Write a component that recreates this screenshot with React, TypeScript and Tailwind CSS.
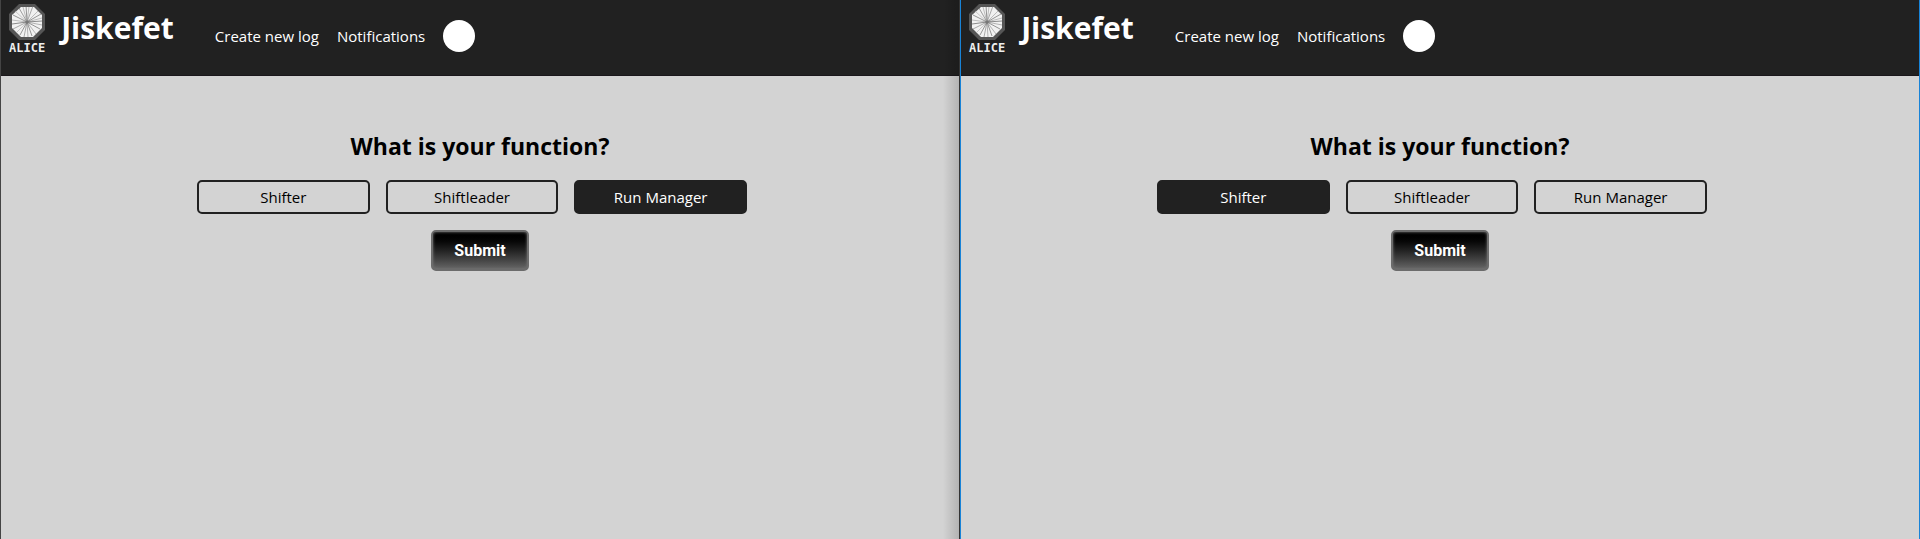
import { useState } from "react";

const FUNCTIONS = ["Shifter", "Shiftleader", "Run Manager"];

const RAYS = [
  [17, 1, "#555"], [20, 3, "#999"], [24, 2, "#777"], [29, 7, "#999"], [32, 10, "#555"],
  [33, 14, "#999"], [33, 17, "#444"], [33, 21, "#888"], [31, 25, "#555"], [27, 30, "#888"],
  [23, 32, "#555"], [19, 33, "#888"], [15, 33, "#777"], [11, 31, "#555"], [7, 29, "#aaa"],
  [4, 25, "#777"], [3, 20, "#444"], [3, 16, "#999"], [4, 11, "#555"], [6, 7, "#aaa"],
  [10, 4, "#666"], [14, 3, "#999"],
] as const;

function AliceLogo() {
  return (
    <svg viewBox="0 0 36 36" className="block size-9" aria-hidden="true">
      <path d="M10 0h16l10 10v16L26 36H10L0 26V10z" fill="#555" />
      <path d="M12 3h13l8 8v13l-9 9H12l-9-9V11z" fill="#f1f1f1" />
      {RAYS.map(([x, y, color]) => (
        <path key={`${x}-${y}`} d={`M18 18L${x} ${y}`} stroke={color} strokeWidth="0.6" />
      ))}
      <circle cx="18" cy="18" r="1.5" fill="#777" />
    </svg>
  );
}

function Header() {
  return (
    <header className="flex h-19 items-start border-b border-[#1a171b] bg-[#212121] pl-2 text-white">
      <a href="#home" className="flex items-start">
        <span className="flex flex-col items-center pt-1">
          <AliceLogo />
          <span className="font-['DejaVu_Sans_Mono',monospace] text-xs leading-4 font-bold text-[#eee]">
            ALICE
          </span>
        </span>
        <span className="ml-4 pt-1 text-[30px] leading-12 font-bold">Jiskefet</span>
      </a>
      <nav className="ml-10 flex items-center gap-4.5 pt-5 pl-px text-[15px] leading-8">
        <a href="#create">Create new log</a>
        <a href="#notifications">Notifications</a>
        <button type="button" aria-label="Profile" className="size-8 rounded-full bg-white" />
      </nav>
    </header>
  );
}

function FunctionPage({ initial }: { initial: string }) {
  const [selected, setSelected] = useState(initial);
  return (
    <>
      <Header />
      <main className="flex flex-col items-center px-4 pt-12">
        <h1 className="text-[23px] leading-11 font-bold text-black">What is your function?</h1>
        <div className="mt-3 flex w-full max-w-[566px]">
          {FUNCTIONS.map((name) => (
            <button
              key={name}
              type="button"
              aria-pressed={selected === name}
              onClick={() => setSelected(name)}
              className={`mr-4 h-[34px] flex-1 rounded-[5px] border-2 border-[#212121] text-[15px] ${
                selected === name ? "bg-[#212121] text-white" : "text-black"
              }`}
            >
              {name}
            </button>
          ))}
        </div>
        <button
          type="submit"
          className="mt-4 h-[41px] w-[98px] rounded-[5px] border-2 border-[#6b6b6b] bg-linear-to-b from-black to-[#666] font-[Roboto,sans-serif] text-base font-bold text-white shadow-[inset_0_0_3px_#777]"
        >
          Submit
        </button>
      </main>
    </>
  );
}

export default function App() {
  return (
    <div className="grid min-h-screen grid-cols-2 bg-[#d3d3d3] font-['Open_Sans',sans-serif]">
      <section className="relative border-x border-l-[#444] border-r-[#333]">
        <FunctionPage initial="Run Manager" />
        <div className="pointer-events-none absolute inset-y-0 right-0 w-4 bg-linear-to-r from-transparent to-black/15" />
      </section>
      <section className="border-x border-l-[#1883d7] border-r-[#1883d7]">
        <FunctionPage initial="Shifter" />
      </section>
    </div>
  );
}
